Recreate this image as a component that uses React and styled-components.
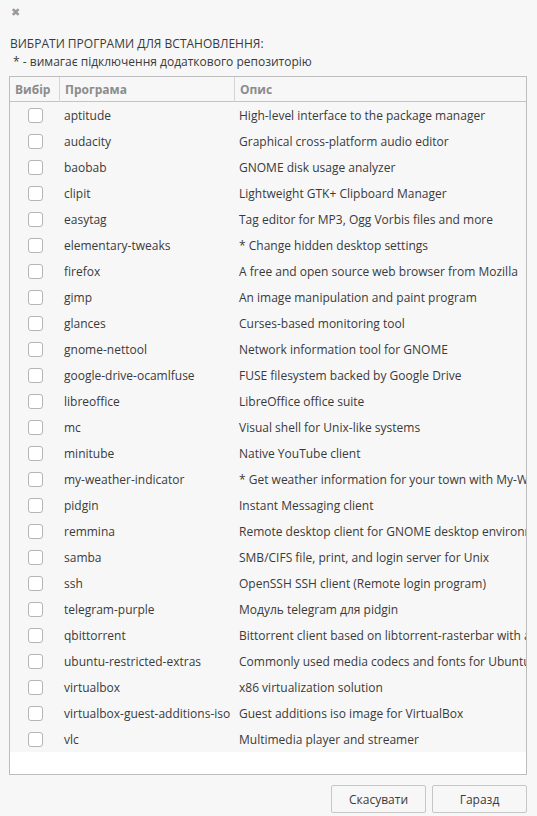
import React from 'react';
import styled, { createGlobalStyle } from 'styled-components';

const GlobalStyle = createGlobalStyle`
  html, body {
    margin: 0;
    padding: 0;
    background: #f7f7f7;
  }
  body {
    font-family: "Open Sans", "Noto Sans", sans-serif;
    font-size: 12px;
    color: #3a3a3a;
  }
`;

const packages = [
  ['aptitude', 'High-level interface to the package manager'],
  ['audacity', 'Graphical cross-platform audio editor'],
  ['baobab', 'GNOME disk usage analyzer'],
  ['clipit', 'Lightweight GTK+ Clipboard Manager'],
  ['easytag', 'Tag editor for MP3, Ogg Vorbis files and more'],
  ['elementary-tweaks', '* Change hidden desktop settings'],
  ['firefox', 'A free and open source web browser from Mozilla'],
  ['gimp', 'An image manipulation and paint program'],
  ['glances', 'Curses-based monitoring tool'],
  ['gnome-nettool', 'Network information tool for GNOME'],
  ['google-drive-ocamlfuse', 'FUSE filesystem backed by Google Drive'],
  ['libreoffice', 'LibreOffice office suite'],
  ['mc', 'Visual shell for Unix-like systems'],
  ['minitube', 'Native YouTube client'],
  ['my-weather-indicator', '* Get weather information for your town with My-Weather-Indicator'],
  ['pidgin', 'Instant Messaging client'],
  ['remmina', 'Remote desktop client for GNOME desktop environment'],
  ['samba', 'SMB/CIFS file, print, and login server for Unix'],
  ['ssh', 'OpenSSH SSH client (Remote login program)'],
  ['telegram-purple', 'Модуль telegram для pidgin'],
  ['qbittorrent', 'Bittorrent client based on libtorrent-rasterbar with a Qt5 GUI'],
  ['ubuntu-restricted-extras', 'Commonly used media codecs and fonts for Ubuntu'],
  ['virtualbox', 'x86 virtualization solution'],
  ['virtualbox-guest-additions-iso', 'Guest additions iso image for VirtualBox'],
  ['vlc', 'Multimedia player and streamer'],
];

const Window = styled.div`
  width: 537px;
  height: 816px;
  display: flex;
  flex-direction: column;
  box-sizing: border-box;
  padding: 0 10px 0 9px;
`;

const TitleBar = styled.div`
  height: 24px;
  display: flex;
  align-items: center;
  padding-left: 2px;
`;

const Close = styled.span`
  color: #9a9a9a;
  font-family: "DejaVu Sans", sans-serif;
  font-size: 11px;
  font-weight: bold;
  line-height: 1;
`;

const Heading = styled.div`
  margin-top: 11px;
  padding-left: 1px;
  line-height: 18px;
`;

const Note = styled.div`
  padding-left: 1px;
  line-height: 17px;
  white-space: pre;
`;

const TableBox = styled.div`
  margin-top: 6px;
  height: 699px;
  border: 1px solid #bdbdbd;
  background: #ffffff;
  overflow: hidden;
  box-sizing: border-box;
`;

const Grid = styled.div`
  display: grid;
  grid-template-columns: 49px 175px 1fr;
`;

const HeadCell = styled.div`
  height: 25px;
  box-sizing: border-box;
  display: flex;
  align-items: center;
  padding-left: 5px;
  font-weight: bold;
  color: #8c8c8c;
  background: #f7f7f7;
  border-bottom: 1px solid #c4c4c4;
  border-left: ${(p) => (p.$first ? 'none' : '1px solid #d6d6d6')};
`;

const Cell = styled.div`
  height: 26px;
  display: flex;
  align-items: center;
  padding-left: ${(p) => (p.$pad ? '5px' : '0')};
  justify-content: ${(p) => (p.$center ? 'center' : 'flex-start')};
  background: #f7f7f7;
  white-space: nowrap;
  overflow: hidden;
`;

const Check = styled.span`
  width: 13px;
  height: 13px;
  border: 1px solid #b5b5b5;
  border-radius: 3px;
  background: #ffffff;
  margin-left: 2px;
`;

const Footer = styled.div`
  display: flex;
  justify-content: flex-end;
  gap: 6px;
  margin-top: 10px;
`;

const Button = styled.button`
  width: 95px;
  height: 28px;
  border: 1px solid #c6c6c6;
  border-radius: 2px;
  background: #f7f7f7;
  font-family: "Open Sans", sans-serif;
  font-size: 12px;
  color: #3a3a3a;
  padding: 0;
`;

export default function App() {
  return (
    <>
      <GlobalStyle />
      <Window>
        <TitleBar>
          <Close>✖</Close>
        </TitleBar>
        <Heading>ВИБРАТИ ПРОГРАМИ ДЛЯ ВСТАНОВЛЕННЯ:</Heading>
        <Note>{' * - вимагає підключення додаткового репозиторію'}</Note>
        <TableBox>
          <Grid>
            <HeadCell $first>Вибір</HeadCell>
            <HeadCell>Програма</HeadCell>
            <HeadCell>Опис</HeadCell>
            {packages.map(([name, desc]) => (
              <React.Fragment key={name}>
                <Cell $center>
                  <Check />
                </Cell>
                <Cell $pad>{name}</Cell>
                <Cell $pad>{desc}</Cell>
              </React.Fragment>
            ))}
          </Grid>
        </TableBox>
        <Footer>
          <Button>Скасувати</Button>
          <Button>Гаразд</Button>
        </Footer>
      </Window>
    </>
  );
}
